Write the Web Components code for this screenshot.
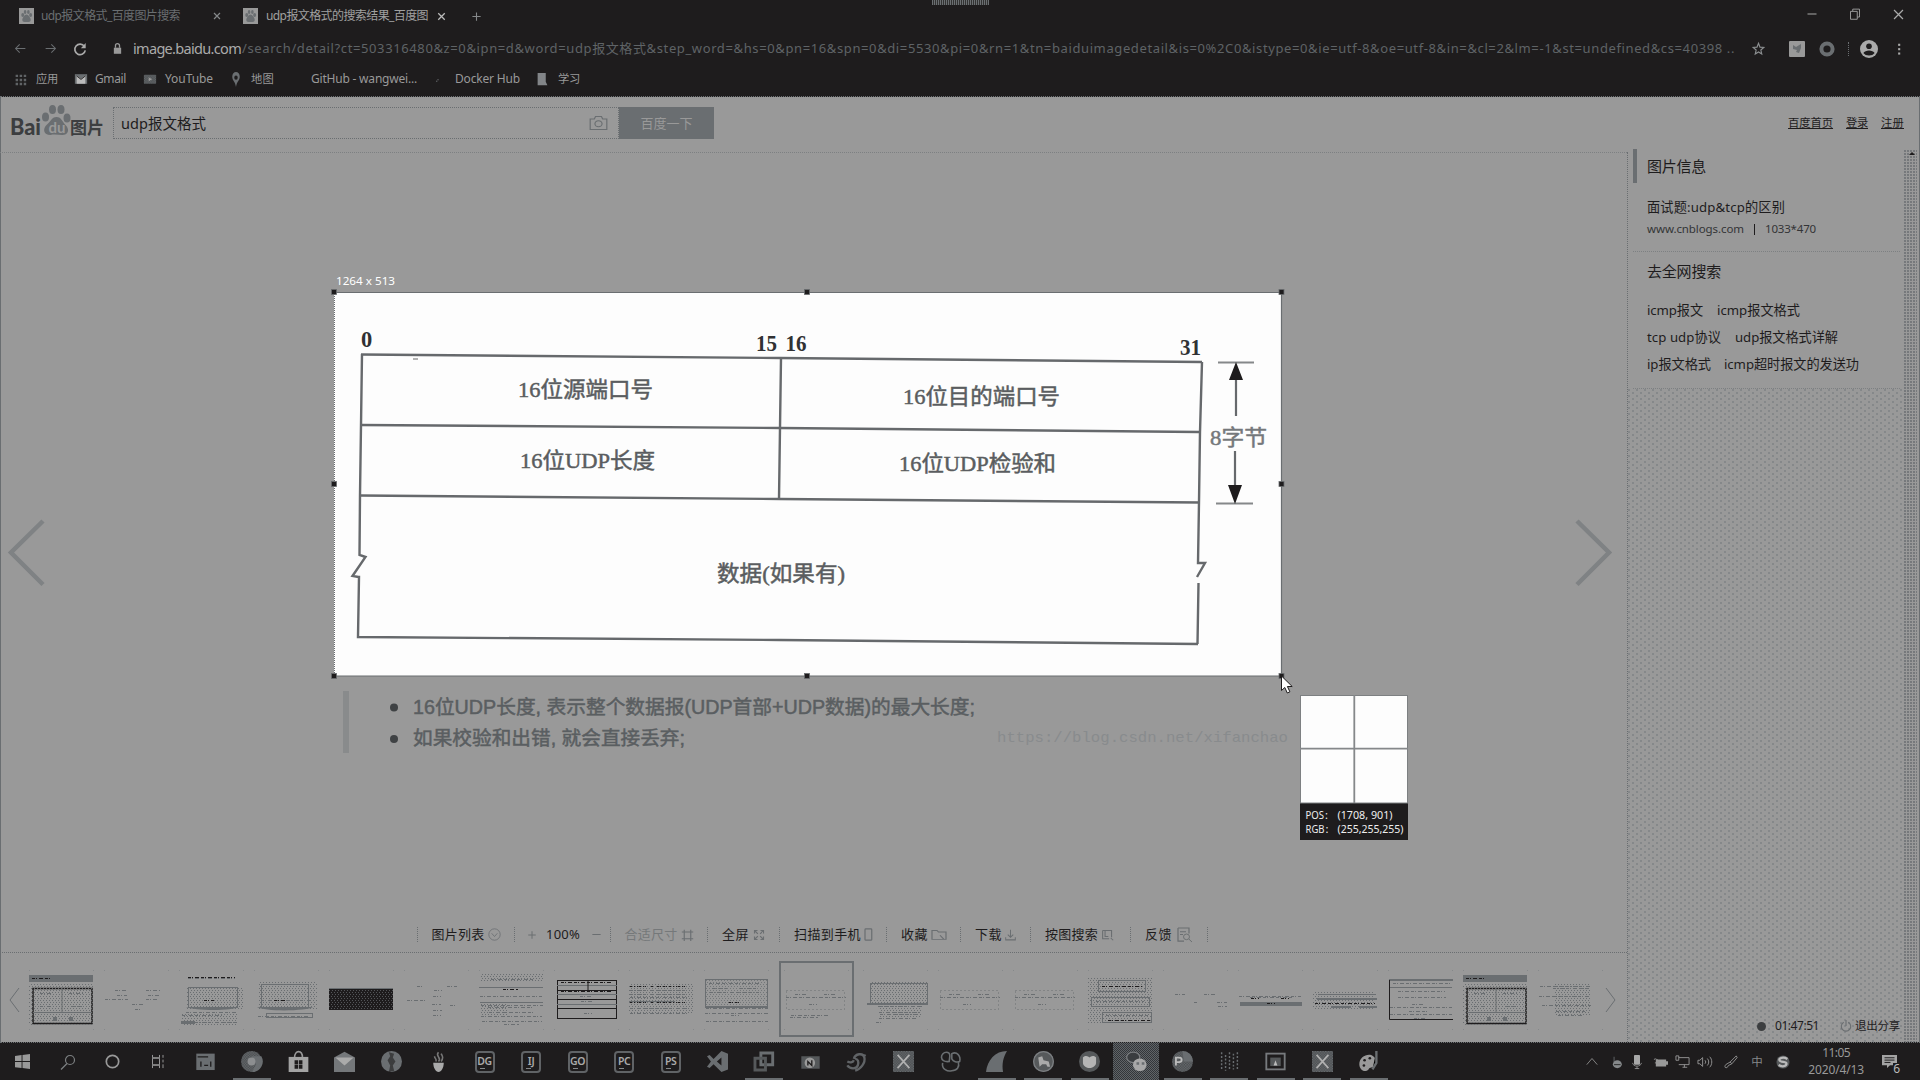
<!DOCTYPE html>
<html lang="zh-CN">
<head>
<meta charset="utf-8">
<title>udp报文格式的搜索结果_百度图片搜索</title>
<style>
html,body{margin:0;background:#1e1c1d}
body{width:1920px;height:1080px;overflow:hidden;font-family:"Noto Sans","Noto Sans CJK SC",sans-serif}
</style>
</head>
<body>
<desktop-screen></desktop-screen>
<script>
const INK='#1e1c1d', MID='#6a6e71', BG='#999';

// Base class: renders a style sheet and markup into an open shadow root.
class Part extends HTMLElement{
  connectedCallback(){
    if(this.shadowRoot) return;
    const root=this.attachShadow({mode:'open'});
    const t=document.createElement('template');
    t.innerHTML=`<style>*{box-sizing:border-box}${this.css()}</style>${this.html()}`;
    root.appendChild(t.content.cloneNode(true));
  }
  css(){return ''}
  html(){return ''}
}

// Text that spreads its letters over a given width.
const fit=(w,text,size,color,extra='')=>`<fit-text w="${w}" style="font-size:${size}px;color:${color};${extra}">${text}</fit-text>`;
const icon=(name,w,h,color=MID)=>`<ui-icon name="${name}" style="width:${w}px;height:${h}px;color:${color}"></ui-icon>`;
// Flow a list of [x, width, markup] along a flex row by their gaps.
const row=(items,start=0)=>{
  let end=start;
  return items.map(([x,w,m])=>{const g=x-end;end=x+w;return `<div style="flex:none;display:flex;align-items:center;width:${w}px;margin-left:${g}px">${m}</div>`}).join('');
};

const S='fill="none" stroke="currentColor"';
const D='fill="url(#d)"';
const ICONS={
  paw:`<rect width="16" height="16" fill="${BG}"/><g fill="${MID}"><ellipse cx="4" cy="7" rx="1.6" ry="2"/><ellipse cx="6.5" cy="4" rx="1.4" ry="2"/><ellipse cx="10" cy="4" rx="1.4" ry="2"/><ellipse cx="12.4" cy="7" rx="1.6" ry="2"/><path d="M8 6.5c2 0 4.500 3.500 4.500 5.500s-2 2-4.500 2-4.500 0-4.500-2S6 6.500 8 6.500z"/></g>`,
  x:`<path ${S} stroke-width="1.600" d="M4 4l8 8M12 4l-8 8"/>`,
  xl:`<path ${S} stroke-width="1.500" d="M2.500 2.500l11 11M13.500 2.500l-11 11"/>`,
  plus:`<path ${S} stroke-width="1.600" d="M8 2v12M2 8h12"/>`,
  minus:`<path ${S} stroke-width="1.500" d="M2 8h12"/>`,
  back:`<path ${S} stroke-width="1.300" d="M14 8H2M7 3L2 8l5 5"/>`,
  fwd:`<path ${S} stroke-width="1.300" d="M2 8h12M9 3l5 5-5 5"/>`,
  reload:`<path ${S} stroke-width="1.900" d="M13 5A6 6 0 1 0 14 9.500"/><path fill="currentColor" d="M14.500 1v6H9z"/>`,
  lock:`<rect x="3.500" y="7" width="9" height="7.500" fill="currentColor"/><path ${S} stroke-width="1.600" d="M5.500 7V4.500a2.500 2.500 0 0 1 5 0V7"/>`,
  apps:`<g fill="currentColor"><path d="M2 2h3v3H2zM7 2h3v3H7zM12 2h3v3h-3zM2 7h3v3H2zM7 7h3v3H7zM12 7h3v3h-3zM2 12h3v3H2zM7 12h3v3H7zM12 12h3v3h-3z"/></g>`,
  gmail:`<rect x="1" y="2.500" width="14" height="11" fill="${MID}"/><path fill="#bbb" d="M3 4l5 4 5-4v9.500H3z"/><path fill="none" stroke="${INK}" d="M3 4.500l5 4 5-4"/>`,
  yt:`<rect x="1" y="3" width="14" height="10.500" rx="1" ${D}/><path fill="#999" d="M6.500 6l4 2.300-4 2.300z"/>`,
  pin:`<path fill="${MID}" d="M8 0a5 5 0 0 1 5 5c0 4-4 5-5 11-1-6-5-7-5-11a5 5 0 0 1 5-5z"/><circle cx="8" cy="6" r="2.300" fill="${INK}"/>`,
  dot:`<circle cx="8" cy="9" r="1" fill="currentColor"/><circle cx="6" cy="11" r="1" fill="currentColor"/>`,
  book:`<path fill="#828588" d="M3 1h9v10l2 4H2V1z"/>`,
  star:`<path ${S} stroke-width="1.400" d="M8 1.500l1.800 4.300 4.700.4-3.600 3 1.100 4.600L8 11.400l-4 2.400 1.100-4.600-3.600-3 4.700-.4z"/>`,
  ext:`<rect width="16" height="16" rx="1" fill="${BG}"/><path fill="${MID}" d="M4 4l3 2 5-3v4l-2 5-3-1 1-2-4-1z"/>`,
  ring:`<circle cx="8" cy="8" r="5.600" ${S} stroke-width="4"/>`,
  avatar:`<circle cx="8" cy="8" r="8" fill="#aaa"/><circle cx="8" cy="5.500" r="2.500" fill="${INK}"/><path fill="${INK}" d="M3 11.500c1.500-3 8.500-3 10 0-2 3-8 3-10 0z"/>`,
  dots:`<g fill="#aaa"><rect x="7" y="2" width="2.400" height="2.400"/><rect x="7" y="7" width="2.400" height="2.400"/><rect x="7" y="12" width="2.400" height="2.400"/></g>`,
  restore:`<path ${S} stroke-width="1.300" d="M2 4.500h9V15H2zM5 4V1.500h9V12h-3"/>`,
  camera:`<path ${S} stroke-width="1" d="M1 4h3.500l1-2.500h5L11.500 4H15v10.500H1z"/><circle cx="8" cy="8.800" r="3" ${S}/>`,
  down:`<circle cx="8" cy="8" r="7" ${S}/><path ${S} d="M4.500 6.500L8 10.500l3.500-4"/>`,
  fitsize:`<path ${S} stroke-width="1.400" d="M4 4h8v9H4zM4 1v3H1M12 1v3h3M1 13h3v3M15 13h-3v3"/>`,
  full:`<path ${S} stroke-width="1.500" d="M2 6V2h4M10 2h4v4M14 10v4h-4M6 14H2v-4M3 3l3.500 3.500M13 3L9.500 6.500M3 13l3.500-3.500M13 13L9.500 9.500"/>`,
  phone:`<rect x="4" y="1" width="9" height="14" rx="1" ${S} stroke-width="1.600"/>`,
  folder:`<path ${S} stroke-width="1.200" d="M1 3h5l1.500 2H15v9H1zM9 9l4 5"/>`,
  dl:`<path ${S} stroke-width="1.400" d="M8 1v10M4 7.500L8 11l4-3.500M1 11v3.500h14V11"/>`,
  imgq:`<path ${S} stroke-width="1.300" d="M2 2h11v9M2 2v11h8M5 2v8h4M12 12l3 3"/>`,
  feed:`<path ${S} stroke-width="1.200" d="M2 1h11v6M2 1v14h6M4 5h6M4 8h3"/><circle cx="10.500" cy="10.500" r="3" ${S}/><path ${S} d="M13 13l3 3"/>`,
  power:`<path ${S} stroke-width="1.500" d="M5 3a6.300 6.300 0 1 0 6 0M8 0v8"/>`,
  win:`<path fill="#999" d="M0 2l7-1v6.500H0zM8 1l8-1v7.500H8zM0 8.500h7V15l-7-1zM8 8.500h8V16l-8-1z"/>`,
  search:`<circle cx="10" cy="6" r="4.500" ${S} stroke-width="1.200"/><path ${S} stroke-width="1.200" d="M7 9.500L1 15.500"/>`,
  cortana:`<circle cx="8" cy="8" r="6.600" fill="none" stroke="#999" stroke-width="1.800"/>`,
  task:`<path fill="none" stroke="#999" d="M3.500 1v3h7V1M3.500 15v-3h7v3M3.500 4.500v7h7v-7z"/><path stroke="#999" d="M14 1v3M14 6v3M14 11v4"/>`,
  panel:`<rect x="1" y="2" width="14" height="12.500" fill="${MID}"/><path stroke="${INK}" d="M2 4.500h8M4.500 8v4M7 11h3M12 8v4"/>`,
  chrome:`<circle cx="8" cy="8" r="8" ${D}/><path fill="${MID}" d="M8 4h7.500a8 8 0 0 1-7 12l3-6z"/><circle cx="8" cy="8" r="3" fill="#8c8e90"/>`,
  store:`<path fill="none" stroke="#999" stroke-width="1.200" d="M5 5c0-6 6-6 6 0"/><rect x="0.500" y="4.500" width="15" height="11.500" fill="#a3a3a3"/><path fill="${INK}" d="M5 7h2.700v3H5zM8.300 7H11v3H8.300zM5 10.500h2.700v3H5zM8.300 10.500H11v3H8.300z"/>`,
  mail:`<path fill="#74777a" d="M0 5l8-4.500L16 5v11H0z"/><path fill="#aaa" d="M1 5h14l-7 6z"/>`,
  globe:`<circle cx="8" cy="8" r="8" fill="${MID}"/><path fill="${INK}" opacity=".6" d="M6 1l4 1-1 3 2 3-2 3 1 4-4 1 1-5-2-4 2-3z"/>`,
  cup:`<path fill="#aaa" d="M4 9h8c0 4-2 7-4 7s-4-3-4-7z"/><path fill="none" stroke="#777" stroke-width="1.200" d="M8 1c-3 3 3 4 0 7M5 4c0 2 2 2 1 4M10 2c1 2 2 3 0 6"/>`,
  vs:`<path fill="${MID}" d="M11 0l5 2v12l-5 2-6-6-3 3-2-1 3-4-3-4 2-1 3 3zM11 5L7.500 8l3.500 3z" fill-rule="evenodd"/>`,
  vm:`<path fill="none" stroke="${MID}" stroke-width="2.200" d="M6 1.500h9v9H6z"/><path fill="none" stroke="#56595b" stroke-width="2.200" d="M1.500 5.500h8v9h-8z"/>`,
  cam2:`<rect x="1" y="4" width="14" height="9.500" fill="#55585a"/><circle cx="7.500" cy="9" r="4" fill="#999"/><path fill="none" stroke="${INK}" d="M6 11V8l3 3V7"/>`,
  swirl:`<path fill="none" stroke="#606366" stroke-width="1.800" d="M1 11c2 3 7 3 8 0s0-5-2-5M6 6c1-4 7-5 8-1s-3 9-7 10M13 4l2-1M1 8c2 1 4 1 5-1"/>`,
  xbox:`<rect x="0" y="0" width="16" height="16" ${D}/><path fill="none" stroke="#b0b0b0" stroke-width="1.300" d="M3.500 3l9 10M12.500 3l-9 10"/>`,
  knot:`<path fill="none" stroke="${MID}" stroke-width="1.200" d="M7 8C-1 9 0 1 5 1c4 0 2 5 2 7zM9 2c4-2 7 2 6 6-2 1-5 0-6-2zM2 9c-1 5 4 7 7 6 4 0 6-3 5-6"/>`,
  shark:`<path fill="${MID}" d="M16 0C7 0 1 7 0 16h13c-1-6 0-11 3-16z"/>`,
  horse:`<circle cx="8" cy="8" r="8" fill="#56595b"/><circle cx="8" cy="8" r="7.500" fill="none" stroke="#7b7e81"/><path fill="#aaa" d="M4 5l3-1 1 3 4 1 1 4h-2l-1-2H7l-2 2z"/>`,
  heart:`<circle cx="8" cy="8" r="8" fill="#56595b"/><path fill="#b5b5b5" d="M3 5c2-2 4-1 5 0 1-1 3-2 5 0v4c0 2-2 4-5 4s-5-2-5-4z"/>`,
  wechat:`<ellipse cx="5.500" cy="5" rx="5.500" ry="4.600" fill="#3a3d40"/><ellipse cx="5.500" cy="4.800" rx="5" ry="4" fill="none" stroke="#7b7e81"/><ellipse cx="10.500" cy="10.500" rx="5.200" ry="4.800" fill="#a8a8a8"/><path fill="${MID}" d="M8 8.500h2v2H8zM12 8.500h2v2h-2z"/>`,
  pball:`<circle cx="8" cy="8" r="8" ${D}/><path fill="${MID}" d="M8 0a8 8 0 0 1 8 8H9z"/><path fill="none" stroke="#bbb" stroke-width="1.400" d="M3 11V5h2.500c2.500 0 2.500 3.500 0 3.500H3"/>`,
  noise:`<path stroke="${MID}" stroke-width="1.100" stroke-dasharray="1.500 1.300" d="M2 1v13M5 3v12M8 1v14M11 2v12M14 1v13"/>`,
  screen:`<rect x="1" y="2" width="14" height="12" fill="none" stroke="#777a7d" stroke-width="1.400"/><rect x="4" y="5" width="8" height="6.500" fill="#55585a"/><path fill="#bbb" d="M6.500 11l1.500-4 1.500 4z"/>`,
  paint:`<path fill="#999" d="M1 10c0-5 5-8 9-7 4 2 5 5 3 8-2 2-4 1-5 3-3 3-7 0-7-4z"/><g fill="${INK}"><circle cx="5" cy="7" r="1"/><circle cx="9" cy="5.500" r="1"/><circle cx="4.500" cy="11" r="1"/></g><path stroke="${MID}" stroke-width="1.800" d="M14 0v9l-3 5"/>`,
  up:`<path fill="none" stroke="#999" d="M1 11l7-7 7 7"/>`,
  pet:`<path stroke="${MID}" fill="none" d="M5 2v6"/><ellipse cx="9" cy="10.500" rx="5.500" ry="4.500" fill="#85888a"/><path stroke="${INK}" d="M5 11h8"/>`,
  mic:`<rect x="4" y="0" width="8" height="11" rx="1" fill="#a8a8a8"/><path stroke="#999" fill="none" d="M2 9c1 5 11 5 12 0M8 13v3M5 15.500h6"/>`,
  batt:`<path fill="#999" d="M3 5h11v8H3zM14 7h2v4h-2z"/><path stroke="#999" fill="none" d="M1 5c3-2 3 2 4 0M2 9h3"/>`,
  net:`<path fill="none" stroke="#999" d="M4 3h11v8H4M8 14h5M10 11v3M1 1v5h3V1z"/>`,
  vol:`<path fill="none" stroke="#999" d="M1 6h2l3-3v10l-3-3H1zM8.500 6c1 1 1 3 0 4M11 4c2 2 2 6 0 8M13.500 2c3 3 3 9 0 12"/>`,
  pen:`<path fill="none" stroke="#999" d="M14 1L7 8l2 2 6-7zM7 8l-5 3c-3 4 2 5 3 1l4-2"/>`,
  sogou:`<circle cx="8" cy="8" r="7.500" fill="#55585a"/><path fill="none" stroke="#bbb" stroke-width="2.600" d="M13 4.500C9 2 3 3 4 6s8 1 8 4-5 4-9 1.500"/>`,
  note:`<path fill="#a3a3a3" d="M0 1h15v11H8l-3 3v-3H0z"/><path stroke="${INK}" d="M2.500 4h10M2.500 6.500h10M2.500 9h6"/>`
};
class UiIcon extends Part{
  css(){return ':host{display:block;flex:none}svg{display:block;width:100%;height:100%;overflow:visible}'}
  html(){return `<svg viewBox="0 0 16 16" preserveAspectRatio="none"><defs><pattern id="d" width="2" height="2" patternUnits="userSpaceOnUse"><rect width="2" height="2" fill="#45484a"/><path fill="${MID}" d="M0 0h1v1H0zM1 1h1v1H1z"/></pattern></defs>${ICONS[this.getAttribute('name')]||''}</svg>`}
}

class BrowserChrome extends Part{
  css(){return `:host{display:flex;flex-direction:column;height:97px;background:${INK};border-bottom:1px dotted ${MID}}
  .r{display:flex;align-items:center;flex:none}.tabs{height:32px}.nav{height:33px}.marks{height:28px}
  .grip{height:5px;width:57px;align-self:flex-start;background:repeating-linear-gradient(90deg,${MID} 0 1px,#333 1px 2px)}
  .wc{display:flex;align-items:center;align-self:stretch;padding-bottom:4px}`}
  html(){
    const q='/search/detail?ct=503316480&amp;z=0&amp;ipn=d&amp;word=udp报文格式&amp;step_word=&amp;hs=0&amp;pn=16&amp;spn=0&amp;di=5530&amp;pi=0&amp;rn=1&amp;tn=baiduimagedetail&amp;is=0%2C0&amp;istype=0&amp;ie=utf-8&amp;oe=utf-8&amp;in=&amp;cl=2&amp;lm=-1&amp;st=undefined&amp;cs=40398 ..';
    const b='#999';
    return `<div class="r tabs">${row([[19,15,icon('paw',15,16)],[41,140,fit(139,'udp报文格式_百度图片搜索',12,MID)],[211,12,icon('x',12,12,'#85888a')],[243,15,icon('paw',15,16)],[266,163,fit(162,'udp报文格式的搜索结果_百度图',12,'#a0a0a0')],[435,13,icon('x',13,13,'#bbb')],[471,13,icon('plus',11,11,'#85888a')]])}
      <div class="grip" style="margin-left:448px"></div>
      <div class="wc">${row([[1806,14,icon('minus',12,12,'#999')],[1849,13,icon('restore',12,12,'#999')],[1892,13,icon('xl',13,13,'#aaa')]],989)}</div></div>
    <div class="r nav">${row([[14,14,icon('back',13,13)],[44,14,icon('fwd',13,13)],[73,15,icon('reload',14,14,'#aaa')],[111,14,icon('lock',13,13,'#999')],[133,109,fit(108,'image.baidu.com',14.5,'#aaa')],[242,1494,fit(1493,q,13,'#5f6366')],[1752,14,icon('star',13,14,'#8b8e90')],[1789,16,icon('ext',16,16)],[1819,16,icon('ring',16,16)],[1848,1,`<i style="height:14px;border-left:1px dotted ${MID}"></i>`],[1860,18,icon('avatar',18,18)],[1892,15,icon('dots',14,14)]])}</div>
    <div class="r marks">${row([[14,14,icon('apps',13,13,'#606366')],[36,23,fit(22,'应用',11.3,b)],[74,14,icon('gmail',14,14)],[95,32,fit(31,'Gmail',12,b)],[143,14,icon('yt',14,14)],[165,49,fit(48,'YouTube',12,b)],[230,12,icon('pin',12,15)],[251,24,fit(23,'地图',11.3,b)],[311,107,fit(106,'GitHub - wangwei...',12,b)],[433,14,icon('dot',10,12)],[455,66,fit(65,'Docker Hub',12,b)],[536,13,icon('book',13,14)],[558,23,fit(22,'学习',11.3,b)]])}</div>`}
}

class SearchHeader extends Part{
  css(){return `:host{display:flex;height:55px;flex:none;align-items:center;padding-bottom:3px}
  .box{display:flex;align-items:center;width:506px;height:32px;margin-left:9px;border:1px dotted ${MID};padding:0 10px 0 7px;justify-content:space-between}
  .btn{display:flex;width:95px;height:32px;background:${MID};align-items:center;justify-content:center}
  .links{display:flex;gap:13px;margin-left:auto;padding-right:16px}
  svg{margin-left:9px;flex:none;margin-top:-6px;overflow:visible}`}
  html(){const l=(w,t)=>fit(w,t,11.3,INK,'text-decoration:underline;text-underline-offset:1px');
    return `<svg width="95" height="34" viewBox="9 102 95 34" font-family="'Noto Sans CJK SC'" font-weight="700">
    <text x="10" y="133.500" font-family="Lato" font-weight="900" font-size="22.500" textLength="31" lengthAdjust="spacingAndGlyphs" fill="#3c3e40">Bai</text>
    <g fill="${MID}"><ellipse cx="45.500" cy="116" rx="3.500" ry="4.500"/><ellipse cx="52.500" cy="108.500" rx="3.500" ry="4.500"/><ellipse cx="61" cy="108.500" rx="3.500" ry="4.500"/><ellipse cx="67" cy="117" rx="3.500" ry="4.500"/><path d="M56.500 116c5 0 6 5 9 8 5 5 2 10-3 10-4 0-8-1-12 0-7 0-8-6-4-10 4-3 5-8 10-8z"/></g>
    <text x="48.500" y="131.500" font-family="Lato" font-weight="700" font-size="15" textLength="17" lengthAdjust="spacingAndGlyphs" fill="${BG}">du</text>
    <text x="70" y="132.500" font-size="17.500" textLength="34" lengthAdjust="spacingAndGlyphs" fill="#3c3e40">图片</text></svg>
    <div class="box">${fit(85,'udp报文格式',14.5,INK)}${icon('camera',19,16)}</div>
    <div class="btn">${fit(52,'百度一下',13,BG)}</div>
    <div class="links">${l(45,'百度首页')}${l(22,'登录')}${l(23,'注册')}</div>`}
}

// The viewed picture with the capture frame and colour probe over it; coordinates are those of the screen.
class ImageStage extends Part{
  css(){return `:host{display:block;height:765px;flex:none;border-top:1px dotted #7d8082}svg{display:block}`}
  html(){
    const h=(x,y)=>`<rect x="${x-2.500}" y="${y-2.500}" width="5" height="5" fill="${INK}" stroke="${MID}" stroke-width=".8"/>`;
    const t=(x,y,w,s,f='#5a5d60')=>`<text x="${x}" y="${y}" font-size="22" textLength="${w}" lengthAdjust="spacingAndGlyphs" fill="${f}" stroke="${f}" stroke-width=".5">${s}</text>`;
    const c=(x,y,w,s)=>`<text x="${x}" y="${y}" font-size="19.500" textLength="${w}" lengthAdjust="spacingAndGlyphs" fill="#5a5e61" stroke="#5a5e61" stroke-width=".5">${s}</text>`;
    return `<svg width="1627" height="764" viewBox="0 153 1627 764">
    <path d="M43 521L11 552.500l32 32M1577 521l32 31.500-32 32" fill="none" stroke="#7f8284" stroke-width="4.500"/>
    <text x="336" y="285" font-size="11.500" fill="#fff" textLength="59" lengthAdjust="spacingAndGlyphs" font-family="'Noto Sans'">1264 x 513</text>
    <rect x="334" y="292" width="948" height="384" fill="#fdfdfd"/>
    <path d="M334 292.500h948M1281.500 292v384M334 676h948" stroke="${MID}" stroke-width="1.200" fill="none"/><path d="M334.500 292v384" stroke="${MID}" stroke-dasharray="1 1"/>
    ${h(334,292)}${h(807,292)}${h(1281.5,292)}${h(334,484)}${h(1281.5,484)}${h(334,676)}${h(807,676)}${h(1281.5,676)}
    <g font-family="'Liberation Serif'" font-weight="700" font-size="22.500" fill="#303133"><text x="361" y="347">0</text><text x="756" y="350.500" textLength="21" lengthAdjust="spacingAndGlyphs">15</text><text x="785.500" y="350.500" textLength="21" lengthAdjust="spacingAndGlyphs">16</text><text x="1180" y="354.500" textLength="21" lengthAdjust="spacingAndGlyphs">31</text></g>
    <g fill="none" stroke="#66696c" stroke-width="2.400"><path d="M361 354.500L780 358l422 4M361 425l419 3 419 4M360 495.500l420 3.500 420 3.500"/>
    <path d="M362 354l-1 71-1 70-.5 60 6 2-13 19 6 1 .5 0-1 60L780 640l418 4"/><path d="M781 358l-1 70-1 71M1202 362l-2 70-1 70-1 61 7 0-8 14M1198.500 583l-1 61"/><path d="M413 359h5" stroke-width="1.500" stroke="#999"/></g>
    <path d="M1218 362.500h36M1216 503.500h37" stroke="#85888a" stroke-width="2.200"/><path d="M1236 370v46M1235 451v43" stroke="#66696c" stroke-width="2.200"/>
    <path d="M1236 362l7 18h-14zM1235 504l7-19h-14z" fill="${INK}"/>
    <g font-family="'Liberation Serif','Noto Sans CJK SC',serif">
    ${t(518,396.5,135,'16位源端口号')}${t(520,468,135,'16位UDP长度')}${t(903,403.5,157,'16位目的端口号')}${t(899,471,157,'16位UDP检验和')}${t(1210,444.5,57,'8字节','#75787b')}${t(717,580.5,128,'数据(如果有)')}</g>
    <rect x="343" y="691" width="6" height="62" fill="#898b8c"/>
    <circle cx="394" cy="707.500" r="4" fill="#3f4244"/><circle cx="394" cy="739" r="4" fill="#3f4244"/>
    <g font-family="'Liberation Sans','Noto Sans CJK SC',sans-serif">${c(413,713.5,562,'16位UDP长度, 表示整个数据报(UDP首部+UDP数据)的最大长度;')}${c(413,744.5,272,'如果校验和出错, 就会直接丢弃;')}</g>
    <text x="997" y="742" font-family="'Liberation Mono'" font-size="15" fill="#888b8d" textLength="291" lengthAdjust="spacingAndGlyphs">https://blog.csdn.net/xifanchao</text>
    <rect x="1300" y="695" width="108" height="145" fill="${INK}"/><rect x="1300.500" y="695.500" width="107" height="107.500" fill="#fdfdfd" stroke="#7d8082"/>
    <path d="M1354.300 695v108M1300 748.700h108" stroke="#85888a" stroke-width="1.800"/>
    <g font-family="'Noto Sans'" font-size="11" fill="#eee"><text x="1305.500" y="818.500" textLength="18.500" lengthAdjust="spacingAndGlyphs">POS</text><text x="1325" y="818.500">:</text><text x="1337.500" y="818.500" textLength="55" lengthAdjust="spacingAndGlyphs">(1708, 901)</text><text x="1305.500" y="833" textLength="19" lengthAdjust="spacingAndGlyphs">RGB</text><text x="1325.500" y="833">:</text><text x="1337.500" y="833" textLength="66" lengthAdjust="spacingAndGlyphs">(255,255,255)</text></g>
    <path d="M1281.500 676v14.500l3.300-3 2.500 5.500 2.600-1.200-2.500-5.300h4.800z" fill="#fff" stroke="${INK}"/></svg>`}
}

class ImageTools extends Part{
  css(){return `:host{display:flex;height:35px;flex:none;padding-left:417px;align-items:center}
  section{display:flex;height:15px;align-items:center;border-left:1px dotted ${MID};flex:none}`}
  html(){const s=(w,start,items)=>`<section style="width:${w}px">${row(items,start+1)}</section>`;
    const f=(w,t,c=INK)=>fit(w,t,13,c);
    return s(97,417,[[431.5,55,f(53,'图片列表')],[488,13,icon('down',13,13)]])
    +s(96,514,[[527,12,icon('plus',10,10)],[546,35,f(34,'100%')],[591,12,icon('minus',11,11)]])
    +s(97,610,[[624.5,55,f(53,'合适尺寸','#75787a')],[681,13,icon('fitsize',13,12)]])
    +s(72,707,[[722,29,f(27,'全屏')],[753,12,icon('full',12,12)]])
    +s(107,779,[[794,68,f(67,'扫描到手机')],[862,13,icon('phone',12,13)]])
    +s(74,886,[[901,29,f(27,'收藏')],[931,16,icon('folder',16,13)]])
    +s(70,960,[[975,29,f(27,'下载')],[1005,12,icon('dl',11,12)]])
    +s(100,1030,[[1045,55,f(53,'按图搜索')],[1101,13,icon('imgq',13,12)]])
    +s(77,1130,[[1145,29,f(27,'反馈')],[1176,16,icon('feed',16,15)]])
    +s(1,1207,[])}
}

// One miniature of the result strip, chosen by its kind.
class ThumbCell extends Part{
  css(){return `:host{display:block;width:75px;height:76px;flex:none}:host([on]){border:2px solid ${MID};margin:0 4px 0 5px}svg{display:block;margin:9px 0 0 5px}:host([on]) svg{margin:7px 0 0 3px}`}
  html(){
    const d=(x,y,w,h,o=.5)=>`<rect x="${x}" y="${y}" width="${w}" height="${h}" fill="url(#n)" opacity="${Math.min(1,o*2)}"/>`;
    const b=(x,y,w,h,c=MID)=>`<rect x="${x+.5}" y="${y+.5}" width="${w-1}" height="${h-1}" fill="none" stroke="${c}"/>`;
    const l=(x,y,w,c=MID,t=1)=>`<rect x="${x}" y="${y}" width="${w}" height="${t}" fill="${c}"/>`;
    const dl=(x,y,w,c=MID)=>`<path d="M${x} ${y+.5}h${w}" stroke="${c}" stroke-dasharray="3 1 1 2 4 2"/>`;
    const faint=dl(11,20,12)+dl(13,25,10)+dl(42,20,14)+dl(44,25,12)+dl(1,29,23)+dl(42,29,12)+dl(28,34,12)+dl(31,39,5);
    const frame=`<rect x="2.500" y="20.500" width="58" height="19" fill="none" stroke="${MID}" stroke-dasharray="1 3"/>`+dl(2,27,60)+dl(11,24,12)+dl(40,24,12)+dl(25,34,8);
    const K={
      blue:l(0,5,64,MID,7)+dl(3,8,19,INK)+`<rect x="4" y="18.500" width="59" height="35" fill="none" stroke="${INK}" stroke-width="1.500"/>`+d(0,13,64,42)+d(1,14,62,40)+l(4,42,58)+`<path d="M33 18v24" stroke="${MID}"/>`+dl(11,23,13)+dl(40,23,14)+dl(11,36,13)+dl(42,36,12)+l(24,47,4,MID,4)+l(40,47,4,MID,4),
      faint,
      boat:dl(9,7,47,INK)+dl(9,8,47)+b(9,17,50,21)+d(8,17,57,22,.5)+`<path fill="${MID}" d="M7 37h52c-5 4-43 4-52 0z"/>`+dl(25,30,10,INK)+dl(7,42,52)+dl(3,45,40)+dl(3,52,54)+d(3,43,56,12)+l(2,51,14,MID,3),
      boat2:d(5,12,58,27,.5)+b(7,14,48,24)+`<path fill="${MID}" d="M3 37h56c-5 4-48 5-56 0z"/>`+dl(7,30,50)+dl(20,30,12,INK)+b(12,43,47,5)+dl(4,46,52),
      dark:l(0,18,64,INK,22)+d(0,18,64,22,.35)+l(0,18,64),
      spots:dl(13,16,7)+dl(43,16,10)+dl(30,20,8)+dl(3,30,18)+dl(29,26,8)+dl(28,34,9)+dl(46,35,7)+dl(29,40,9)+dl(29,45,8),
      lines:d(1,3,63,8)+dl(12,9,42)+l(0,17,64)+dl(24,19,15,INK)+dl(1,26,62)+l(1,32,63)+dl(2,35,62)+dl(9,37,45)+dl(10,42,44)+dl(2,46,61)+dl(3,51,60)+dl(25,54,15)+d(2,34,26,12,.5),
      table:b(3,10,60,39,INK)+[15,20,24,29,34,38].map((y,i)=>l(3,y,60,i%2?INK:MID)).join('')+dl(7,12,50,INK)+dl(7,21,52,INK)+dl(26,26,12)+dl(27,31,12)+dl(30,43,8)+`<path d="M34 10v10" stroke="${INK}"/>`,
      tbl2:[16,20,24,27,32,38,43].map((y,i)=>dl(1,y,58,i%2?MID:(i%4?MID:INK))).join('')+l(0,31,46)+d(0,14,64,30,.5),
      form:b(1,9,63,28)+l(1,36,63,MID,2)+dl(5,13,51)+dl(8,18,15)+dl(36,18,17)+dl(6,22,49)+dl(24,32,12,INK)+dl(2,38,62)+dl(1,43,63)+dl(2,51,62)+dl(27,45,8)+d(2,10,61,27,.4),
      pick:frame+dl(7,45,38)+dl(6,47,28),
      block:d(8,12,57,22,.7)+b(7,13,58,21)+d(7,13,58,21,.7)+l(4,33,61,MID,2)+dl(15,36,45)+dl(16,42,40)+dl(17,44,38)+dl(16,48,37)+dl(13,52,5)+d(16,36,42,12),
      frame,
      doc:d(0,8,64,45,.5)+b(10,10,48,12)+dl(14,16,40,INK)+b(3,27,59,10)+dl(8,31,48)+b(14,42,50,11)+dl(18,45,42)+dl(20,50,42,INK),
      small:dl(12,24,10)+dl(41,24,12)+dl(31,32,4)+dl(54,32,10)+dl(55,36,9),
      bar:dl(1,26,62)+dl(12,27,42)+l(2,32,62,MID,4)+dl(13,28,8,INK)+dl(43,28,8,INK)+dl(29,33,8,INK),
      bars:l(5,24,58)+l(4,28,60,MID,2)+dl(2,33,60,INK)+l(18,36,20,MID,2)+l(46,36,18,MID,2)+d(0,22,62,17),
      form2:l(1,9,64,MID,2)+`<path d="M1.500 10v39.500H65" fill="none" stroke="${INK}"/>`+dl(5,13,58)+l(2,17,62)+dl(10,21,47)+dl(10,27,48)+dl(24,34,13)+dl(2,37,62)+dl(21,41,19)+dl(2,44,62)+dl(26,48,13),
      last:dl(2,16,49)+dl(15,18,35)+dl(1,26,52)+dl(4,35,49)+dl(18,41,30)+dl(20,45,26)+d(16,14,36,32)
    };
    return `<svg width="65" height="60" viewBox="0 0 65 60"><defs><pattern id="n" width="3" height="4" patternUnits="userSpaceOnUse"><path fill="${MID}" d="M0 0h1v1H0zM2 2h1v1H2z"/></pattern></defs><g fill="#85888a"><path d="M0 0h1v1H0zM64 0h1v1h-1zM0 59h1v1H0zM64 59h1v1h-1z"/></g>${K[this.getAttribute('kind')]}</svg>`}
}

class ThumbStrip extends Part{
  css(){return `:host{display:flex;height:90px;flex:none;border-top:1px dotted ${MID};padding:8px 0 0 9px}.a{flex:none;width:11px;height:76px;display:block}.z{margin-left:-8px;overflow:visible}`}
  html(){const k=['blue','faint','boat','boat2','dark','spots','lines','table','tbl2','form','pick','block','frame','frame','doc','small','bar','bars','form2','blue','last'];
    const a=(c,p)=>`<svg class="${c}" viewBox="0 0 11 76"><path d="${p}" fill="none" stroke="${MID}"/></svg>`;
    return a('a','M10 27L1 39l9 12')+`<div style="display:flex;margin-left:4px">${k.map((n,i)=>`<thumb-cell kind="${n}"${i===10?' on':''}></thumb-cell>`).join('')}</div>`+a('a z','M6 27l9 12-9 12')}
}

class InfoPanel extends Part{
  css(){return `:host{display:flex;width:293px;height:890px;border-left:1px dotted ${MID};flex:none}
  .col{display:flex;flex-direction:column;width:275px}
  .info{height:100px;border-bottom:1px dotted #7d8082;margin:0 3px 0 5px}
  .head{height:34px;margin-left:0;border-left:4px solid ${MID};display:flex;align-items:center;padding-left:10px;margin-top:-3px}
  .p{display:flex;align-items:center}
  .more{height:137px;border-bottom:1px dotted #7d8082;margin:0 3px 0 5px}
  .rest{flex:1;display:flex;flex-direction:column;justify-content:flex-end;background:radial-gradient(circle at 1px 1px,#85888a .7px,transparent .9px) 0 0/8px 6px,radial-gradient(circle at 5px 4px,#85888a .7px,transparent .9px) 0 0/8px 6px}
  .rec{height:32px;display:flex;align-items:center;padding-left:128px}
  .bar{width:13px;margin:-2px 0 0 1px;background:radial-gradient(circle at 1px 1px,#75787b .7px,transparent .9px) 0 0/3px 3px}
  .edge{width:1px;background:${MID};margin:-55px 0 0 2px}
  .tri{width:0;border:3px solid transparent;border-bottom-color:${INK};margin:-1px 0 0 5px}`}
  html(){const r=(h,items,m=0)=>`<div class="p" style="height:${h}px;margin-top:${m}px">${row(items,1633)}</div>`;
    const s=(w,t)=>fit(w,t,13.2,INK);
    return `<div class="col"><div class="info"><div class="head">${fit(59,'图片信息',15,INK)}</div>
    ${r(24,[[1647,139,s(138,'面试题:udp&amp;tcp的区别')]],12)}${r(20,[[1647,98,fit(97,'www.cnblogs.com',11.500,'#333436')],[1754,1,`<i style="height:11px;border-left:1px solid ${INK}"></i>`],[1765,52,fit(51,'1033*470',11.500,'#333436')]])}</div>
    <div class="more">${r(28,[[1647,75,fit(74,'去全网搜索',15,INK)]],5)}${r(28,[[1647,57,s(56,'icmp报文')],[1717,84,s(83,'icmp报文格式')]],11)}${r(27,[[1647,75,s(74,'tcp udp协议')],[1735,104,s(103,'udp报文格式详解')]])}${r(27,[[1647,65,s(64,'ip报文格式')],[1724,136,s(135,'icmp超时报文的发送功')]])}</div>
    <div class="rest"><div class="rec">${row([[1757,9,`<i style="width:9px;height:9px;border-radius:5px;background:#3c3e40"></i>`],[1775,45,fit(44,'01:47:51',12,INK)],[1840,13,icon('power',12,12)],[1855,46,fit(45,'退出分享',11.5,INK)]],1756)}</div></div></div>
    <div class="bar"><div class="tri"></div></div><div class="edge"></div>`}
}

class TaskBar extends Part{
  css(){return `:host{display:flex;height:38px;background:${INK};flex:none;border-top:1px dotted ${MID}}
  .b{width:46.550px;height:37px;flex:none;display:flex;align-items:center;justify-content:center}
  .b.run{background:linear-gradient(${MID},${MID}) 50% 100%/38px 2px no-repeat}
  .b.on{background:repeating-conic-gradient(#606467 0 25%,#33363a 0 50%) 0 0/2px 2px}
  .f{display:flex;align-items:center;flex:none}
  .tray{display:flex;align-items:center;flex:none}
  .clock{display:flex;flex-direction:column;align-items:center;width:58px;gap:1px;justify-content:center}
  .jb{width:20px;height:22px;border:2px solid #606366;border-radius:4px;font:600 10.500px/16px "Noto Sans";color:#aaa;text-align:center;letter-spacing:-.3px}
  .jb::after{content:"";display:block;width:5px;height:1px;background:#85888a;margin:-1px 0 0 3px}
  .six{font:12px/12px "Noto Sans";color:#bbb;align-self:flex-end;margin:0 0 -6px -5px;background:${INK}}`}
  html(){
    const list=['panel','chrome*','store','mail','globe','cup','=DG','=IJ','=GO','=PC','=PS','vs','vm*','cam2','swirl','xbox','knot','shark*','horse*','heart*','wechat+','pball*','noise*','screen*','xbox*','paint*'];
    const btn=n=>{const run=/\*$/.test(n),on=/\+$/.test(n),k=n.replace(/[*+]$/,'');
      return `<div class="b${run?' run':''}${on?' on':''}">${k[0]==='='?`<div class="jb">${k.slice(1)}</div>`:icon(k,21,21)}</div>`};
    const tr=[['up',1592,12],['pet',1616,13],['mic',1637,12],['batt',1660,15],['net',1682,15],['vol',1704,15],['pen',1731,14]];
    return `<div class="f" style="width:182px">${row([[15,16,icon('win',15,15)],[60,16,icon('search',16,16,'#7d8082')],[105,15,icon('cortana',15,15)],[149,17,icon('task',16,15)]])}</div>
    ${list.map(btn).join('')}
    <div class="tray" style="margin-left:auto;padding-right:20px">${row([...tr.map(([n,x,w])=>[x-w/2,w,icon(n,w,14)]),[1751,12,fit(11,'中',11.500,'#85888a')],[1776,14,icon('sogou',14,14)]],1586)}
      <div class="clock" style="margin-left:17px">${fit(28,'11:05',12,'#999','line-height:16px;margin:0')}${fit(56,'2020/4/13',12,'#999','line-height:16px;margin:0')}</div>
      <div style="display:flex;align-items:center;margin-left:17px">${icon('note',16,15)}<span class="six">6</span></div></div>`}
}

class DesktopScreen extends Part{
  css(){return `:host{display:flex;flex-direction:column;width:1920px;height:1080px;overflow:hidden;background:${INK}}
  main{display:flex;flex-direction:column;height:945px;background:${BG};border-left:1px solid ${MID};flex:none}
  .row{display:flex;margin-left:-1px}.view{width:1627px;flex:none}search-header{margin-left:-1px}`}
  html(){return `<browser-chrome></browser-chrome><main><search-header></search-header><div class="row"><div class="view"><image-stage></image-stage><image-tools></image-tools><thumb-strip></thumb-strip></div><info-panel></info-panel></div></main><task-bar></task-bar>`}
}

class FitText extends Part{
  css(){return ':host{display:inline-block;white-space:pre;flex:none;margin-bottom:2px}'}
  html(){return '<slot></slot>'}
  connectedCallback(){
    super.connectedCallback();
    const n=[...this.textContent].length, w=this.getBoundingClientRect().width;
    if(n) this.style.letterSpacing=((+this.getAttribute('w')-w)/n).toFixed(3)+'px';
  }
}
customElements.define('ui-icon',UiIcon);
customElements.define('desktop-screen',DesktopScreen);
customElements.define('browser-chrome',BrowserChrome);
customElements.define('search-header',SearchHeader);
customElements.define('image-stage',ImageStage);
customElements.define('image-tools',ImageTools);
customElements.define('thumb-cell',ThumbCell);
customElements.define('thumb-strip',ThumbStrip);
customElements.define('info-panel',InfoPanel);
customElements.define('task-bar',TaskBar);
customElements.define('fit-text',FitText);
</script>
</body>
</html>
